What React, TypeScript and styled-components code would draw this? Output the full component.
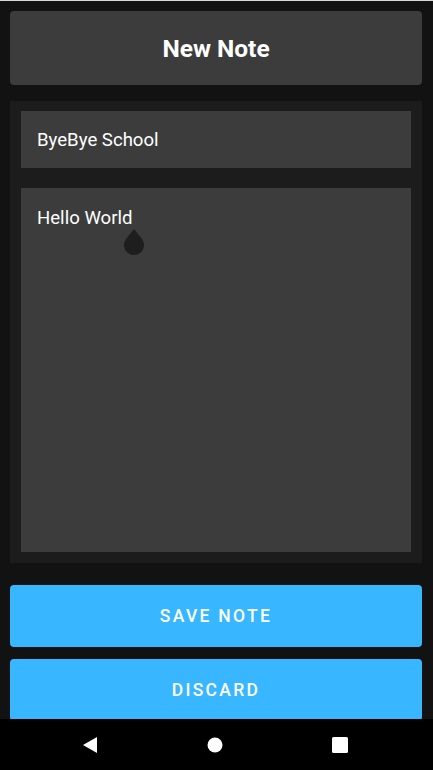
import React, { useState } from 'react';
import styled, { createGlobalStyle } from 'styled-components';

const GlobalStyle = createGlobalStyle`
  html, body {
    margin: 0;
    padding: 0;
    background: #121212;
    font-family: Roboto, "Noto Sans", sans-serif;
  }
  * { box-sizing: border-box; }
`;

const Screen = styled.div`
  width: 433px;
  height: 770px;
  display: flex;
  flex-direction: column;
  background: #121212;
  border-top: 1px solid #d8d8d8;
  overflow: hidden;
`;

const Content = styled.div`
  flex: 1;
  display: flex;
  flex-direction: column;
  padding: 10px 11px 0 10px;
  overflow: hidden;
`;

const Header = styled.div`
  height: 74px;
  flex-shrink: 0;
  border-radius: 4px;
  background: #3c3c3c;
  display: flex;
  align-items: center;
  justify-content: center;
`;

const Title = styled.h1`
  margin: 0;
  color: #ffffff;
  font-size: 24.5px;
  font-weight: 700;
`;

const Panel = styled.div`
  margin-top: 16px;
  height: 462px;
  flex-shrink: 0;
  background: #1c1c1c;
  padding: 10px 11px 11px 11px;
  display: flex;
  flex-direction: column;
  gap: 20px;
`;

const Field = styled.div<{ $grow?: boolean }>`
  position: relative;
  background: #3c3c3c;
  color: #ffffff;
  font-size: 18.6px;
  padding: ${(p) => (p.$grow ? '19px 16px' : '0 16px')};
  height: ${(p) => (p.$grow ? 'auto' : '57px')};
  flex: ${(p) => (p.$grow ? 1 : '0 0 auto')};
  display: flex;
  align-items: ${(p) => (p.$grow ? 'flex-start' : 'center')};
`;

const Handle = styled.svg`
  position: absolute;
  left: 101px;
  top: 41px;
`;

const Button = styled.button`
  height: 62px;
  border: none;
  border-radius: 4px;
  background: #38b6ff;
  color: #ffffff;
  font-family: Roboto, "Noto Sans", sans-serif;
  font-size: 17.5px;
  font-weight: 500;
  letter-spacing: 2.3px;
  text-transform: uppercase;
  cursor: pointer;
  flex-shrink: 0;
`;

const Buttons = styled.div`
  margin-top: 22px;
  display: flex;
  flex-direction: column;
  gap: 12px;
`;

const NavBar = styled.div`
  height: 51px;
  flex-shrink: 0;
  background: #000000;
  display: flex;
  align-items: center;
  gap: 85px;
  padding-left: 70px;
`;

const NavButton = styled.div`
  width: 40px;
  height: 40px;
  display: flex;
  align-items: center;
  justify-content: center;
`;

export default function App() {
  const [title] = useState('ByeBye School');
  const [body] = useState('Hello World');

  return (
    <>
      <GlobalStyle />
      <Screen>
        <Content>
          <Header>
            <Title>New Note</Title>
          </Header>
          <Panel>
            <Field>{title}</Field>
            <Field $grow>
              {body}
              <Handle width="24" height="26" viewBox="0 0 24 26">
                <path d="M12 0 L20 10 A10 10 0 1 1 4 10 Z" fill="#1e1e1e" />
              </Handle>
            </Field>
          </Panel>
          <Buttons>
            <Button>Save Note</Button>
            <Button>Discard</Button>
          </Buttons>
        </Content>
        <NavBar>
          <NavButton>
            <svg width="16" height="16" viewBox="0 0 16 16">
              <path d="M15 0 L15 16 L1 8 Z" fill="#ffffff" />
            </svg>
          </NavButton>
          <NavButton>
            <svg width="16" height="16" viewBox="0 0 16 16">
              <circle cx="8" cy="8" r="7.5" fill="#ffffff" />
            </svg>
          </NavButton>
          <NavButton>
            <svg width="16" height="16" viewBox="0 0 16 16">
              <rect x="0" y="0" width="16" height="16" rx="1.5" fill="#ffffff" />
            </svg>
          </NavButton>
        </NavBar>
      </Screen>
    </>
  );
}
